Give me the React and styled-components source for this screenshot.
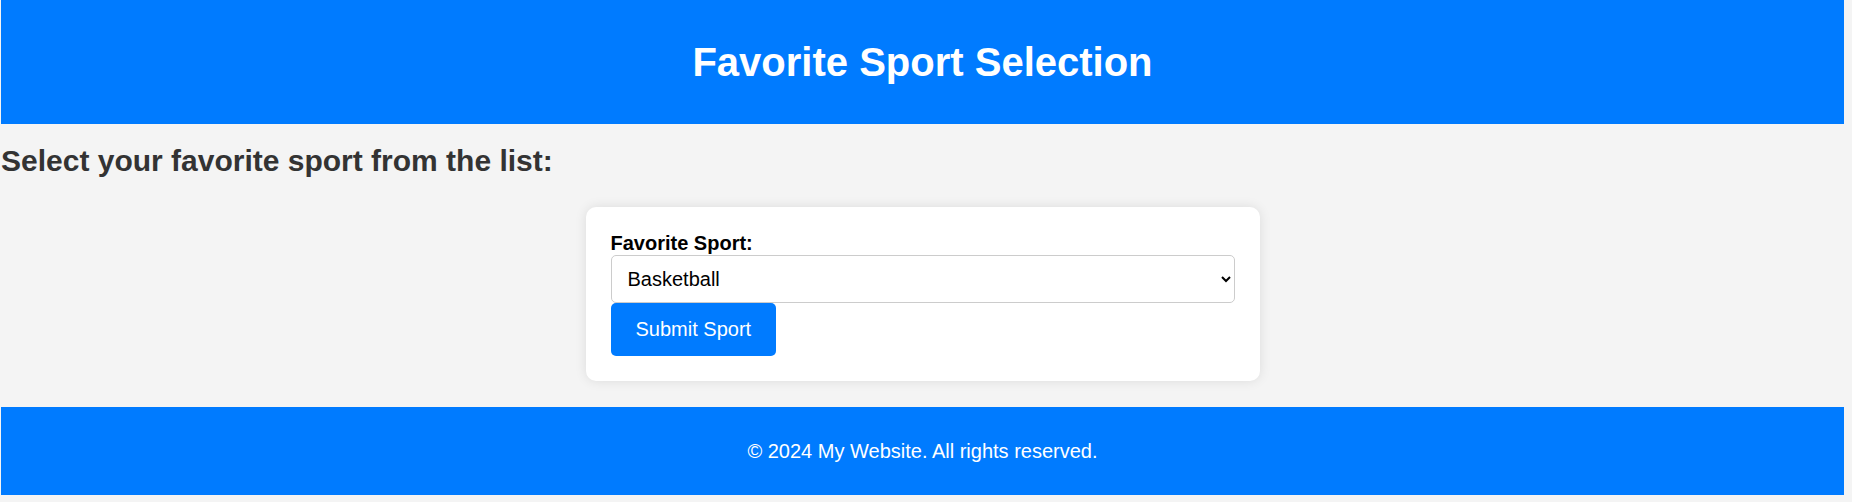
import React, { useState } from "react";
import styled, { createGlobalStyle } from "styled-components";

const GlobalStyle = createGlobalStyle`
  body {
    margin: 0;
    background-color: #f4f4f4;
    font-family: "Liberation Sans", Arial, sans-serif;
  }
`;

const Page = styled.div`
  width: 1843px;
  margin-left: 1px;
`;

const Header = styled.header`
  background-color: #007bff;
  color: #fff;
  text-align: center;
  padding: 12px 0;
`;

const Title = styled.h1`
  font-size: 40px;
  font-weight: 700;
  margin: 27px 0;
  line-height: 46px;
`;

const Subtitle = styled.h2`
  font-size: 30px;
  font-weight: 700;
  color: #333;
  margin: 20px 0 29px;
  line-height: 34px;
`;

const Card = styled.form`
  width: 624px;
  margin: 0 auto;
  background: #fff;
  padding: 25px;
  border-radius: 10px;
  box-shadow: 0 0 12px rgba(0, 0, 0, 0.1);
`;

const Label = styled.label`
  display: block;
  font-size: 20px;
  font-weight: 700;
  line-height: 23px;
  color: #000;
`;

const Select = styled.select`
  display: block;
  width: 100%;
  height: 48px;
  padding: 0 12px;
  font-size: 20px;
  font-family: "Liberation Sans", Arial, sans-serif;
  color: #000;
  background: #fff;
  border: 1.25px solid #ccc;
  border-radius: 5px;
  box-sizing: border-box;
`;

const Button = styled.button`
  display: block;
  padding: 15px 25px;
  font-size: 20px;
  line-height: 23px;
  font-family: "Liberation Sans", Arial, sans-serif;
  color: #fff;
  background-color: #007bff;
  border: none;
  border-radius: 5px;
  cursor: pointer;
`;

const Footer = styled.footer`
  background-color: #007bff;
  color: #fff;
  text-align: center;
  padding: 12.5px 0;
  margin-top: 26px;
`;

const FooterText = styled.p`
  margin: 20px 0;
  font-size: 20px;
  line-height: 23px;
`;

const sports = ["Football", "Basketball", "Tennis", "Baseball", "Soccer", "Hockey"];

function App() {
  const [sport, setSport] = useState("Basketball");

  return (
    <Page>
      <GlobalStyle />
      <Header>
        <Title>Favorite Sport Selection</Title>
      </Header>
      <Subtitle>Select your favorite sport from the list:</Subtitle>
      <Card onSubmit={(e) => e.preventDefault()}>
        <Label htmlFor="sport">Favorite Sport:</Label>
        <Select id="sport" value={sport} onChange={(e) => setSport(e.target.value)}>
          {sports.map((s) => (
            <option key={s} value={s}>
              {s}
            </option>
          ))}
        </Select>
        <Button type="submit">Submit Sport</Button>
      </Card>
      <Footer>
        <FooterText>© 2024 My Website. All rights reserved.</FooterText>
      </Footer>
    </Page>
  );
}

export default App;
